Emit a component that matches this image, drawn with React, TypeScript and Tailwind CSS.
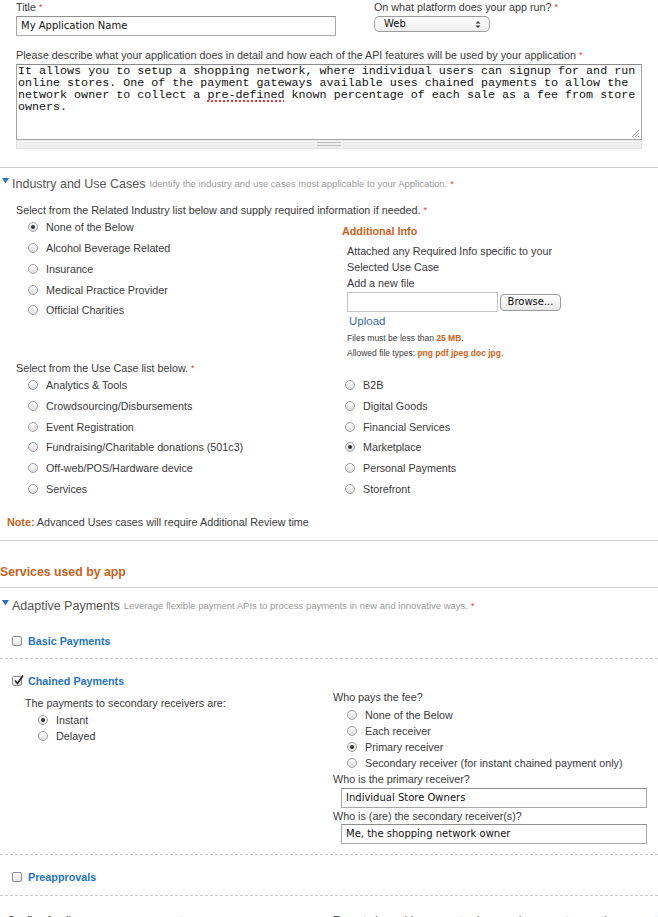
import React from "react";

const sans = "font-['Liberation_Sans',Arial,sans-serif]";

function Req() {
  return <span className="ml-[3px] align-top text-[9px] text-[#e53a2f]">*</span>;
}

function Radio({ checked }: { checked?: boolean }) {
  return (
    <span className="inline-flex h-[10px] w-[10px] shrink-0 items-center justify-center rounded-full border border-[#a0a0a0] bg-gradient-to-b from-white to-[#dedede]">
      {checked && <span className="h-[4px] w-[4px] rounded-full bg-[#333]" />}
    </span>
  );
}

function Checkbox({ checked }: { checked?: boolean }) {
  return (
    <span className="relative inline-flex h-[10px] w-[10px] shrink-0 rounded-[2px] border border-[#8a8a8a] bg-gradient-to-b from-white to-[#e4e4e4]">
      {checked && (
        <svg className="absolute -top-[3px] left-0" width="12" height="12" viewBox="0 0 12 12">
          <path d="M2 6.5 L4.5 9.5 L10 1.5" fill="none" stroke="#222" strokeWidth="1.6" />
        </svg>
      )}
    </span>
  );
}

function RadioRow({ label, checked, h }: { label: string; checked?: boolean; h: string }) {
  return (
    <div className={`flex items-center ${h}`}>
      <Radio checked={checked} />
      <span className="ml-[8px]">{label}</span>
    </div>
  );
}

function Triangle() {
  return (
    <svg width="7" height="6" viewBox="0 0 7 6" className="mr-[3px] mt-[2px] self-start">
      <path d="M0 0 L7 0 L3.5 5.5 Z" fill="#2a74c0" />
    </svg>
  );
}

function TextInput({ value, className }: { value: string; className: string }) {
  return (
    <div
      className={`flex items-center border border-[#a9a9a9] border-t-[#8f8f8f] bg-white pl-[4px] font-['DejaVu_Sans',sans-serif] text-[10px] text-[#111] ${className}`}
    >
      {value}
    </div>
  );
}

function Dashed() {
  return <div className="border-t border-dashed border-[#c8c8c8]" />;
}

export default function App() {
  return (
    <div className={`w-[658px] bg-white text-[10.75px] leading-[14px] text-[#3a3a3a] ${sans}`}>
      {/* Title + platform */}
      <div className="flex pl-[16px]">
        <div className="w-[320px]">
          <div>
            Title<Req />
          </div>
          <TextInput value="My Application Name" className="mt-[2px] h-[20px] w-[320px]" />
        </div>
        <div className="ml-[38px]">
          <div>
            On what platform does your app run?<Req />
          </div>
          <div className="mt-[2px] flex h-[16px] w-[116px] items-center justify-between rounded-[5px] border border-[#9c9c9c] bg-gradient-to-b from-white to-[#ececec] pl-[9px] pr-[8px] font-['DejaVu_Sans',sans-serif] text-[10px] text-[#111]">
            <span>Web</span>
            <svg width="6" height="9" viewBox="0 0 6 9">
              <path d="M0.5 3.5 L3 1 L5.5 3.5 Z M0.5 5.5 L3 8 L5.5 5.5 Z" fill="#333" />
            </svg>
          </div>
        </div>
      </div>

      {/* Description */}
      <div className="mt-[12px] pl-[16px]">
        <div>
          Please describe what your application does in detail and how each of the API features will be used by your application
          <Req />
        </div>
        <div className="relative mt-[2px] h-[76px] w-[626px] border border-[#a3a3a3] border-t-[#8a8a8a] bg-white pl-[1px] font-['Liberation_Mono','Courier_New',monospace] text-[11.7px] leading-[12px] text-[#111]">
          It allows you to setup a shopping network, where individual users can signup for and run online stores. One of the
          payment gateways available uses chained payments to allow the network owner to collect a{" "}
          <span className="underline decoration-[#e33] decoration-dotted decoration-[1.5px] underline-offset-[2px]">pre-defined</span> known
          percentage of each sale as a fee from store owners.
          <svg className="absolute bottom-[1px] right-[1px]" width="9" height="9" viewBox="0 0 9 9">
            <path d="M8 1 L1 8 M8 4 L4 8 M8 7 L7 8" stroke="#999" strokeWidth="1" />
          </svg>
        </div>
        <div className="flex h-[9px] w-[626px] items-center justify-center border-x border-b border-[#e2e2e2] bg-[#efefef]">
          <div className="flex w-[24px] flex-col gap-[2px]">
            <div className="h-px bg-[#bbb]" />
            <div className="h-px bg-[#bbb]" />
          </div>
        </div>
      </div>

      <div className="mt-[18px] h-px bg-[#cfcfcf]" />

      {/* Industry and Use Cases */}
      <div className="mt-[8px] flex items-center pl-[2px] leading-[16px]">
        <Triangle />
        <span className="text-[12.5px] text-[#555]">Industry and Use Cases</span>
        <span className="ml-[4px] text-[9.5px] text-[#9a9a9a]">Identify the industry and use cases most applicable to your Application.</span>
        <Req />
      </div>

      <div className="mt-[11px] pl-[16px]">
        Select from the Related Industry list below and supply required information if needed.
        <Req />
      </div>

      <div className="flex">
        <div className="w-[314px] pl-[28px]">
          <RadioRow h="h-[20.75px]" label="None of the Below" checked />
          <RadioRow h="h-[20.75px]" label="Alcohol Beverage Related" />
          <RadioRow h="h-[20.75px]" label="Insurance" />
          <RadioRow h="h-[20.75px]" label="Medical Practice Provider" />
          <RadioRow h="h-[20.75px]" label="Official Charities" />
        </div>
        <div className="pl-[28px]">
          <div className="mt-[7px] font-bold text-[#c8621b]">Additional Info</div>
          <div className="ml-[5px] mt-[5px] leading-[16px]">
            <div>Attached any Required Info specific to your</div>
            <div>Selected Use Case</div>
            <div>Add a new file</div>
          </div>
          <div className="ml-[5px] mt-[1px] flex items-center">
            <div className="h-[20px] w-[151px] border border-[#c4c4c4] bg-white" />
            <div className="ml-[2px] flex h-[17px] w-[61px] items-center justify-center rounded-[4px] border border-[#9a9a9a] bg-gradient-to-b from-white to-[#e8e8e8] font-['DejaVu_Sans',sans-serif] text-[10px] text-[#111]">
              Browse...
            </div>
          </div>
          <div className="ml-[7px] mt-[2px] text-[11.5px] text-[#3a6ea8]">Upload</div>
          <div className="ml-[5px] mt-[3px] text-[8.5px]">
            Files must be less than <span className="font-bold text-[#c8621b]">25 MB</span>.
          </div>
          <div className="ml-[5px] mt-[1px] text-[8.5px]">
            Allowed file types: <span className="font-bold text-[#c8621b]">png pdf jpeg doc jpg</span>.
          </div>
        </div>
      </div>

      <div className="mt-[2px] pl-[16px] leading-[13px]">
        Select from the Use Case list below.
        <Req />
      </div>
      <div className="flex">
        <div className="w-[317px] pl-[28px]">
          <RadioRow h="h-[20.7px]" label="Analytics & Tools" />
          <RadioRow h="h-[20.7px]" label="Crowdsourcing/Disbursements" />
          <RadioRow h="h-[20.7px]" label="Event Registration" />
          <RadioRow h="h-[20.7px]" label="Fundraising/Charitable donations (501c3)" />
          <RadioRow h="h-[20.7px]" label="Off-web/POS/Hardware device" />
          <RadioRow h="h-[20.7px]" label="Services" />
        </div>
        <div className="pl-[28px]">
          <RadioRow h="h-[20.7px]" label="B2B" />
          <RadioRow h="h-[20.7px]" label="Digital Goods" />
          <RadioRow h="h-[20.7px]" label="Financial Services" />
          <RadioRow h="h-[20.7px]" label="Marketplace" checked />
          <RadioRow h="h-[20.7px]" label="Personal Payments" />
          <RadioRow h="h-[20.7px]" label="Storefront" />
        </div>
      </div>

      <div className="mt-[16px] pl-[7px]">
        <span className="font-bold text-[#c8621b]">Note:</span> Advanced Uses cases will require Additional Review time
      </div>

      <div className="mt-[11px] h-px bg-[#cfcfcf]" />

      <div className="mt-[23px] text-[12.3px] font-bold leading-[16px] text-[#c8621b]">Services used by app</div>

      <div className="mt-[7px] h-px bg-[#cfcfcf]" />

      <div className="mt-[10px] flex items-center pl-[2px] leading-[16px]">
        <Triangle />
        <span className="text-[12.5px] text-[#555]">Adaptive Payments</span>
        <span className="ml-[4px] text-[9.5px] text-[#9a9a9a]">Leverage flexible payment APIs to process payments in new and innovative ways.</span>
        <Req />
      </div>

      <div className="mt-[20px] flex items-center pl-[12px]">
        <Checkbox />
        <span className="ml-[6px] font-bold text-[#1f72bd]">Basic Payments</span>
      </div>

      <div className="mt-[10px]">
        <Dashed />
      </div>

      <div className="mt-[15px] flex items-center pl-[12px]">
        <Checkbox checked />
        <span className="ml-[6px] font-bold text-[#1f72bd]">Chained Payments</span>
      </div>

      <div className="flex">
        <div className="w-[333px] pl-[25px]">
          <div className="mt-[8px]">The payments to secondary receivers are:</div>
          <div className="mt-[2px] pl-[13px]">
            <RadioRow h="h-[16px]" label="Instant" checked />
            <RadioRow h="h-[16px]" label="Delayed" />
          </div>
        </div>
        <div>
          <div className="mt-[2px]">Who pays the fee?</div>
          <div className="mt-[3px] pl-[14px]">
            <RadioRow h="h-[16px]" label="None of the Below" />
            <RadioRow h="h-[16px]" label="Each receiver" />
            <RadioRow h="h-[16px]" label="Primary receiver" checked />
            <RadioRow h="h-[16px]" label="Secondary receiver (for instant chained payment only)" />
          </div>
          <div className="mt-[1px]">Who is the primary receiver?</div>
          <TextInput value="Individual Store Owners" className="ml-[8px] mt-[2px] h-[20px] w-[306px]" />
          <div className="mt-[1px]">Who is (are) the secondary receiver(s)?</div>
          <TextInput value="Me, the shopping network owner" className="ml-[8px] mt-[1px] h-[20px] w-[306px]" />
        </div>
      </div>

      <div className="mt-[10px]">
        <Dashed />
      </div>

      <div className="mt-[15px] flex items-center pl-[12px]">
        <Checkbox />
        <span className="ml-[6px] font-bold text-[#1f72bd]">Preapprovals</span>
      </div>

      <div className="mt-[11px]">
        <Dashed />
      </div>

      <div className="mt-[17px] flex pb-[20px]">
        <div className="w-[333px] pl-[7px]">Confirm funding sources you support</div>
        <div>Expected monthly payment volume and average transaction amount</div>
      </div>
    </div>
  );
}
